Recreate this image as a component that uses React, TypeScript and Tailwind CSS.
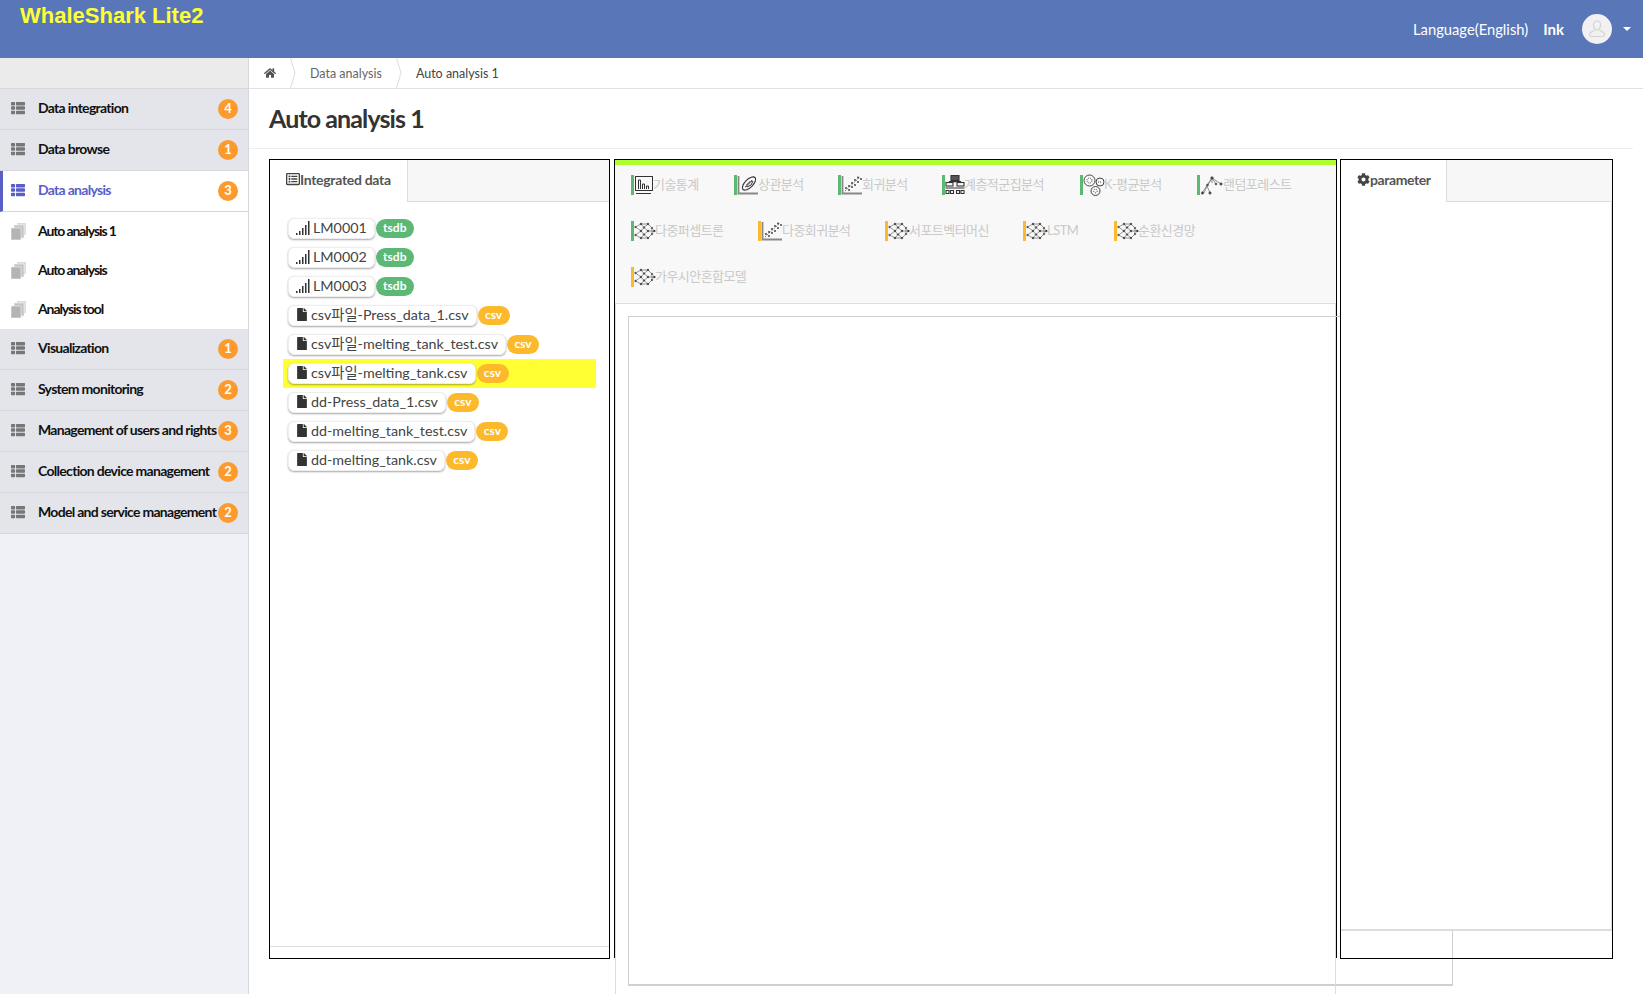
import { FaCog, FaFile, FaHome, FaRegListAlt, FaThList } from 'react-icons/fa';

const menuTop = [
  { label: 'Data integration', count: 4 },
  { label: 'Data browse', count: 1 },
  { label: 'Data analysis', count: 3, active: true },
];
const subMenu = ['Auto analysis 1', 'Auto analysis', 'Analysis tool'];
const menuBottom = [
  { label: 'Visualization', count: 1 },
  { label: 'System monitoring', count: 2 },
  { label: 'Management of users and rights', count: 3 },
  { label: 'Collection device management', count: 2 },
  { label: 'Model and service management', count: 2 },
];

const sources = [
  { name: 'LM0001', tag: 'tsdb' },
  { name: 'LM0002', tag: 'tsdb' },
  { name: 'LM0003', tag: 'tsdb' },
  { name: 'csv파일-Press_data_1.csv', tag: 'csv' },
  { name: 'csv파일-melting_tank_test.csv', tag: 'csv' },
  { name: 'csv파일-melting_tank.csv', tag: 'csv', selected: true },
  { name: 'dd-Press_data_1.csv', tag: 'csv' },
  { name: 'dd-melting_tank_test.csv', tag: 'csv' },
  { name: 'dd-melting_tank.csv', tag: 'csv' },
];

type Tool = { label: string; icon: keyof typeof toolIcons; color: 'green' | 'orange'; width: string };

function ChartIcon() {
  return (
    <svg viewBox="0 0 20 20" className="h-5 w-5 shrink-0" fill="none" stroke="#333" strokeWidth="1">
      <rect x="1.500" y="1.500" width="17" height="14" />
      <path d="M4.500 14V5h2v9M8.500 14V9h2v5M12.500 14v-3h2v3" />
      <path d="M2 18.500h15" />
    </svg>
  );
}

function CorrIcon() {
  return (
    <svg viewBox="0 0 22 20" className="h-5 w-[22px] shrink-0" fill="none" stroke="#333" strokeWidth="1.100">
      <path d="M1.500 1v17.500H21" stroke="#888" strokeWidth="1.800" />
      <ellipse cx="12" cy="8.500" rx="8.500" ry="4" transform="rotate(-45 12 8.500)" />
      <path d="M8 12l2-1 0-2 2 0 0-2 2 0 1-2M10 12l2-1 2-1 1-2 1-2" strokeWidth="1" />
    </svg>
  );
}

function RegressionIcon() {
  return (
    <svg viewBox="0 0 22 20" className="h-5 w-[22px] shrink-0" fill="#333" stroke="none">
      <path d="M1.500 1v17.500H21" fill="none" stroke="#888" strokeWidth="1.800" />
      <path d="M4 16L19 2" fill="none" stroke="#555" strokeWidth=".8" strokeDasharray="1.500 1" />
      <circle cx="5" cy="13" r=".9" />
      <circle cx="8" cy="15" r=".9" />
      <circle cx="8" cy="11" r=".9" />
      <circle cx="11" cy="12" r=".9" />
      <circle cx="11" cy="8" r=".9" />
      <circle cx="14" cy="10" r=".9" />
      <circle cx="14" cy="5" r=".9" />
      <circle cx="17" cy="7" r=".9" />
      <circle cx="17" cy="2.500" r=".9" />
      <circle cx="20" cy="4" r=".9" />
    </svg>
  );
}

function HierarchyIcon() {
  return (
    <svg viewBox="0 0 20 20" className="h-5 w-5 shrink-0" fill="none" stroke="#333" strokeWidth="1.100">
      <rect x="6" y=".5" width="8" height="5" fill="#555" />
      <rect x="1" y="7.500" width="7" height="3.500" />
      <rect x="12" y="7.500" width="7" height="3.500" />
      <path d="M10 5.500v2M4.500 7.500V6.500h11v1M.5 13h19" />
      <path d="M1 15.500h3v3H1zM5.500 15.500h3v3h-3zM11.500 15.500h3v3h-3zM16 15.500h3v3h-3z" />
    </svg>
  );
}

function KMeansIcon() {
  return (
    <svg viewBox="0 0 22 22" className="h-[22px] w-[22px] shrink-0" fill="none" stroke="#444" strokeWidth="1">
      <circle cx="6.500" cy="6.500" r="5.500" />
      <circle cx="6.500" cy="6.500" r="2.500" strokeDasharray="1 1" />
      <circle cx="17" cy="8" r="4" />
      <path d="M15 8h4" strokeDasharray="1 1" />
      <circle cx="12.500" cy="17" r="4.500" />
      <circle cx="12.500" cy="17" r="1.800" strokeDasharray="1 1" />
    </svg>
  );
}

function TreeIcon() {
  return (
    <svg viewBox="0 0 24 20" className="h-5 w-6 shrink-0" fill="#333" stroke="#666" strokeWidth=".7">
      <path d="M12 3L2 18M12 3L7 11M12 3l4 6M12 3l9 6M7 11l3 7M7 11l-3 7M12 3v5" fill="none" />
      <circle cx="12" cy="3" r="1.300" />
      <circle cx="7.500" cy="10" r="1" />
      <circle cx="16" cy="9" r="1" />
      <circle cx="21" cy="9" r="1.200" />
      <circle cx="2.500" cy="18" r="1.200" />
      <circle cx="10" cy="18" r="1.200" />
    </svg>
  );
}

function NetworkIcon() {
  return (
    <svg viewBox="0 0 22 20" className="h-5 w-[22px] shrink-0" fill="#222" stroke="#555" strokeWidth=".6">
      <path
        d="M1.500 6L7 3M1.500 6L7 10M1.500 14L7 10M1.500 14L7 17M7 3h7M7 3l3 3.500 4-3.500M7 10l3-3.500L14 10l-4 3.500L7 10M7 17l3-3.500 4 3.500M7 17h7M14 3l4 4M14 17l4-4M14 10h7M18 7v6"
        fill="none"
      />
      <circle cx="1.500" cy="6" r=".8" />
      <circle cx="1.500" cy="14" r=".8" />
      <circle cx="7" cy="3" r=".9" />
      <circle cx="7" cy="10" r=".9" />
      <circle cx="7" cy="17" r=".9" />
      <circle cx="10" cy="6.500" r=".8" />
      <circle cx="10" cy="13.500" r=".8" />
      <circle cx="14" cy="3" r=".9" />
      <circle cx="14" cy="10" r=".9" />
      <circle cx="14" cy="17" r=".9" />
      <circle cx="18" cy="7" r=".8" />
      <circle cx="18" cy="13" r=".8" />
      <path d="M19.500 8.500L22 10l-2.500 1.500z" stroke="none" />
    </svg>
  );
}

const toolIcons = {
  chart: ChartIcon,
  corr: CorrIcon,
  regression: RegressionIcon,
  hierarchy: HierarchyIcon,
  kmeans: KMeansIcon,
  tree: TreeIcon,
  network: NetworkIcon,
};

const toolRows: Tool[][] = [
  [
    { label: '기술통계', icon: 'chart', color: 'green', width: 'w-[103px]' },
    { label: '상관분석', icon: 'corr', color: 'green', width: 'w-[104px]' },
    { label: '회귀분석', icon: 'regression', color: 'green', width: 'w-[104px]' },
    { label: '계층적군집분석', icon: 'hierarchy', color: 'green', width: 'w-[138px]' },
    { label: 'K-평균분석', icon: 'kmeans', color: 'green', width: 'w-[117px]' },
    { label: '랜덤포레스트', icon: 'tree', color: 'green', width: 'w-[130px]' },
  ],
  [
    { label: '다중퍼셉트론', icon: 'network', color: 'green', width: 'w-[127px]' },
    { label: '다중회귀분석', icon: 'regression', color: 'orange', width: 'w-[127px]' },
    { label: '서포트벡터머신', icon: 'network', color: 'orange', width: 'w-[138px]' },
    { label: 'LSTM', icon: 'network', color: 'orange', width: 'w-[91px]' },
    { label: '순환신경망', icon: 'network', color: 'orange', width: 'w-[100px]' },
  ],
  [{ label: '가우시안혼합모델', icon: 'network', color: 'orange', width: 'w-[140px]' }],
];

function StackIcon() {
  return (
    <svg viewBox="0 0 15 17" className="h-[17px] w-[15px]">
      <rect x="6" y="0" width="9" height="12" fill="#dcdcdc" />
      <rect x="3" y="2" width="10" height="13" fill="#c4c4c4" stroke="#f3f3f3" strokeWidth=".6" />
      <rect x="0" y="5" width="10" height="12" fill="#b4b4b4" stroke="#f3f3f3" strokeWidth=".6" />
    </svg>
  );
}

function SignalIcon() {
  return (
    <svg viewBox="0 0 14 14" className="h-3.5 w-3.5" fill="#333">
      <rect x="0" y="12" width="1.500" height="2" />
      <rect x="3" y="10" width="1.500" height="4" />
      <rect x="6" y="7" width="1.500" height="7" />
      <rect x="9" y="4" width="1.500" height="10" />
      <rect x="12" y="0" width="1.500" height="14" />
    </svg>
  );
}

function MenuItem({ label, count, active }: { label: string; count: number; active?: boolean }) {
  return (
    <div
      className={
        active
          ? 'flex h-[41px] items-center border-b border-l-[3px] border-b-[#d5d7dc] border-l-[#5a5fc8] bg-white pl-[8px] pr-[10px]'
          : 'flex h-[41px] items-center border-b border-[#d5d7dc] bg-[#e3e5ea] pl-[11px] pr-[10px]'
      }
    >
      <FaThList className={active ? 'mb-[3px] h-[14px] w-[14px] shrink-0 text-[#5a5fc8]' : 'mb-[3px] h-[14px] w-[14px] shrink-0 text-[#777]'} />
      <span
        className={
          active
            ? 'ml-[13px] flex-1 whitespace-nowrap pb-[3px] text-[14px] font-bold tracking-[-0.7px] text-[#5a5fc8]'
            : 'ml-[13px] flex-1 whitespace-nowrap pb-[3px] text-[14px] font-bold tracking-[-0.7px] text-[#111]'
        }
      >
        {label}
      </span>
      <span className="flex h-5 w-5 shrink-0 items-center justify-center rounded-full bg-[#fd9a2d] text-[13px] font-bold text-white">
        {count}
      </span>
    </div>
  );
}

function ToolButton({ tool }: { tool: Tool }) {
  const Icon = toolIcons[tool.icon];
  return (
    <div className={`flex h-5 shrink-0 items-center ${tool.width}`}>
      <span className={tool.color === 'green' ? 'h-5 w-[3px] bg-[#5cb874]' : 'h-5 w-[3px] bg-[#fdb92c]'} />
      <Icon />
      <span className="-ml-[1px] whitespace-nowrap text-[13px] tracking-[-0.55px] text-[#c9c9c9]">{tool.label}</span>
    </div>
  );
}

export default function App() {
  return (
    <div className="flex h-screen flex-col overflow-hidden bg-white font-['Lato','Noto_Sans_CJK_KR',sans-serif] text-[#333]">
      <header className="flex h-[58px] shrink-0 items-start justify-between bg-[#5876b8]">
        <div className="ml-[20px] mt-[1px] font-['Liberation_Sans',sans-serif] text-[22px] font-bold leading-[29px] text-[#ffff33]">
          WhaleShark Lite2
        </div>
        <div className="mr-[12px] flex h-full items-center text-white">
          <span className="text-[14.75px]">Language(English)</span>
          <span className="ml-[15px] text-[15px] font-bold">Ink</span>
          <span className="ml-[18px] flex h-[30px] w-[30px] items-center justify-center rounded-full bg-[#f1f1f1]">
            <svg viewBox="0 0 20 20" className="h-5 w-5" fill="none" stroke="#d4d4d4" strokeWidth="1.200">
              <path d="M10 2c2.400 0 3.600 1.800 3.600 4S12 11 10 11 6.400 8.200 6.400 6 7.600 2 10 2z" />
              <path d="M7.500 11c-.5 1.500-5 1.500-5 4.500 0 1.500.5 2 1.500 2h12c1 0 1.500-.5 1.500-2 0-3-4.500-3-5-4.500" />
            </svg>
          </span>
          <span className="ml-[11px] h-0 w-0 border-x-[4px] border-t-[4px] border-x-transparent border-t-white" />
        </div>
      </header>

      <div className="flex min-h-0 flex-1">
        <aside className="w-[249px] shrink-0 border-r border-[#d5d7dc] bg-[#eff1f6]">
          <div className="h-[31px] border-b border-[#d5d7dc] bg-[#ebebeb]" />
          {menuTop.map((m) => (
            <MenuItem key={m.label} {...m} />
          ))}
          <div className="bg-white">
            {subMenu.map((s) => (
              <div key={s} className="flex h-[39px] items-center pl-[11px]">
                <StackIcon />
                <span className="ml-[12px] pb-[3px] text-[14px] font-bold tracking-[-1.1px] text-[#111]">{s}</span>
              </div>
            ))}
          </div>
          {menuBottom.map((m) => (
            <MenuItem key={m.label} {...m} />
          ))}
        </aside>

        <main className="flex min-w-0 flex-1 flex-col">
          <nav className="flex h-[31px] shrink-0 items-center border-b border-[#e2e2e2] text-[12.5px]">
            <FaHome className="ml-[15px] h-[12px] w-[12px] text-[#555]" />
            <svg viewBox="0 0 6 30" className="ml-[14px] h-[30px] w-[6px]" fill="none" stroke="#ddd">
              <path d="M.5 0L5 15 .5 30" />
            </svg>
            <span className="ml-[14px] pt-[2px] text-[#666]">Data analysis</span>
            <svg viewBox="0 0 6 30" className="ml-[14px] h-[30px] w-[6px]" fill="none" stroke="#ddd">
              <path d="M.5 0L5 15 .5 30" />
            </svg>
            <span className="ml-[14px] pt-[2px] text-[#444]">Auto analysis 1</span>
          </nav>

          <div className="mr-[10px] flex h-[60px] shrink-0 items-center border-b border-[#eee] pl-[20px]">
            <h1 className="text-[25px] font-bold tracking-[-0.9px] text-[#333]">Auto analysis 1</h1>
          </div>

          <div className="flex min-h-0 flex-1 pl-[20px] pt-[10px]">
            <section className="flex h-[800px] w-[341px] shrink-0 flex-col border border-black">
              <div className="flex h-[42px] shrink-0 border-b border-[#ddd] bg-[#f7f7f7]">
                <div className="-mb-px flex w-[138px] items-center border-r border-[#ddd] bg-white pb-[4px] pl-[16px] text-[14px] font-bold tracking-[-0.3px] text-[#555]">
                  <FaRegListAlt className="h-[14px] w-[14px] text-[#444]" />
                  Integrated data
                </div>
              </div>
              <div className="flex-1 pl-[13px] pt-[12px]">
                {sources.map((s) => (
                  <div
                    key={s.name}
                    className={s.selected ? 'flex h-[29px] w-[313px] items-center bg-[#ffff33] pl-[5px]' : 'flex h-[29px] w-[313px] items-center pl-[5px]'}
                  >
                    <span className="flex h-[21px] items-center gap-[3px] rounded-[6px] border border-[#eee] bg-white px-[7px] pb-[2px] text-[14.3px] text-[#444] shadow-[0_1px_2px_rgba(0,0,0,0.35)]">
                      {s.tag === 'tsdb' ? <SignalIcon /> : <FaFile className="h-[13px] w-[12px] text-[#333]" />}
                      {s.name}
                    </span>
                    <span
                      className={
                        s.tag === 'tsdb'
                          ? 'ml-[1px] flex h-[19px] w-[38px] items-center justify-center rounded-full bg-[#5cb874] pb-[1px] text-[12px] font-bold text-white'
                          : 'ml-[1px] flex h-[19px] w-[32px] items-center justify-center rounded-full bg-[#fdb92c] pb-[1px] text-[12px] font-bold text-white'
                      }
                    >
                      {s.tag}
                    </span>
                  </div>
                ))}
              </div>
              <div className="h-[12px] shrink-0 border-t border-[#ddd]" />
            </section>

            <div className="ml-[4px] flex w-[723px] shrink-0 flex-col">
              <section className="flex h-[799px] shrink-0 flex-col border-x border-t border-black">
                <div className="h-[5px] shrink-0 bg-[#adff2f]" />
                <div className="h-[139px] shrink-0 border-b border-[#ddd] bg-[#f8f8f8] pl-[16px]">
                  {toolRows.map((row, i) => (
                    <div key={i} className="flex h-[46px] pt-[10px]">
                      {row.map((t) => (
                        <ToolButton key={t.label} tool={t} />
                      ))}
                    </div>
                  ))}
                </div>
                <div className="flex-1 border-x border-[#ddd]">
                  <div className="ml-[12px] mt-[12px] h-[670px] w-[825px] border border-b-2 border-[#d0d0d0]" />
                </div>
              </section>
              <div className="mx-px flex-1 border-x border-[#ddd]" />
            </div>

            <section className="relative z-10 ml-[3px] flex h-[800px] w-[273px] shrink-0 flex-col border border-black">
              <div className="flex h-[42px] shrink-0 border-b border-[#ddd] bg-[#f7f7f7]">
                <div className="-mb-px flex w-[106px] items-center border-r border-[#ddd] bg-white pb-[4px] pl-[16px] text-[14px] font-bold tracking-[-0.4px] text-[#555]">
                  <FaCog className="h-[13px] w-[13px] text-[#444]" />
                  parameter
                </div>
              </div>
              <div className="flex-1 border-r border-[#ddd] bg-white" />
              <div className="h-[29px] shrink-0 border-t-2 border-[#ddd]" />
            </section>
          </div>
        </main>
      </div>
    </div>
  );
}
